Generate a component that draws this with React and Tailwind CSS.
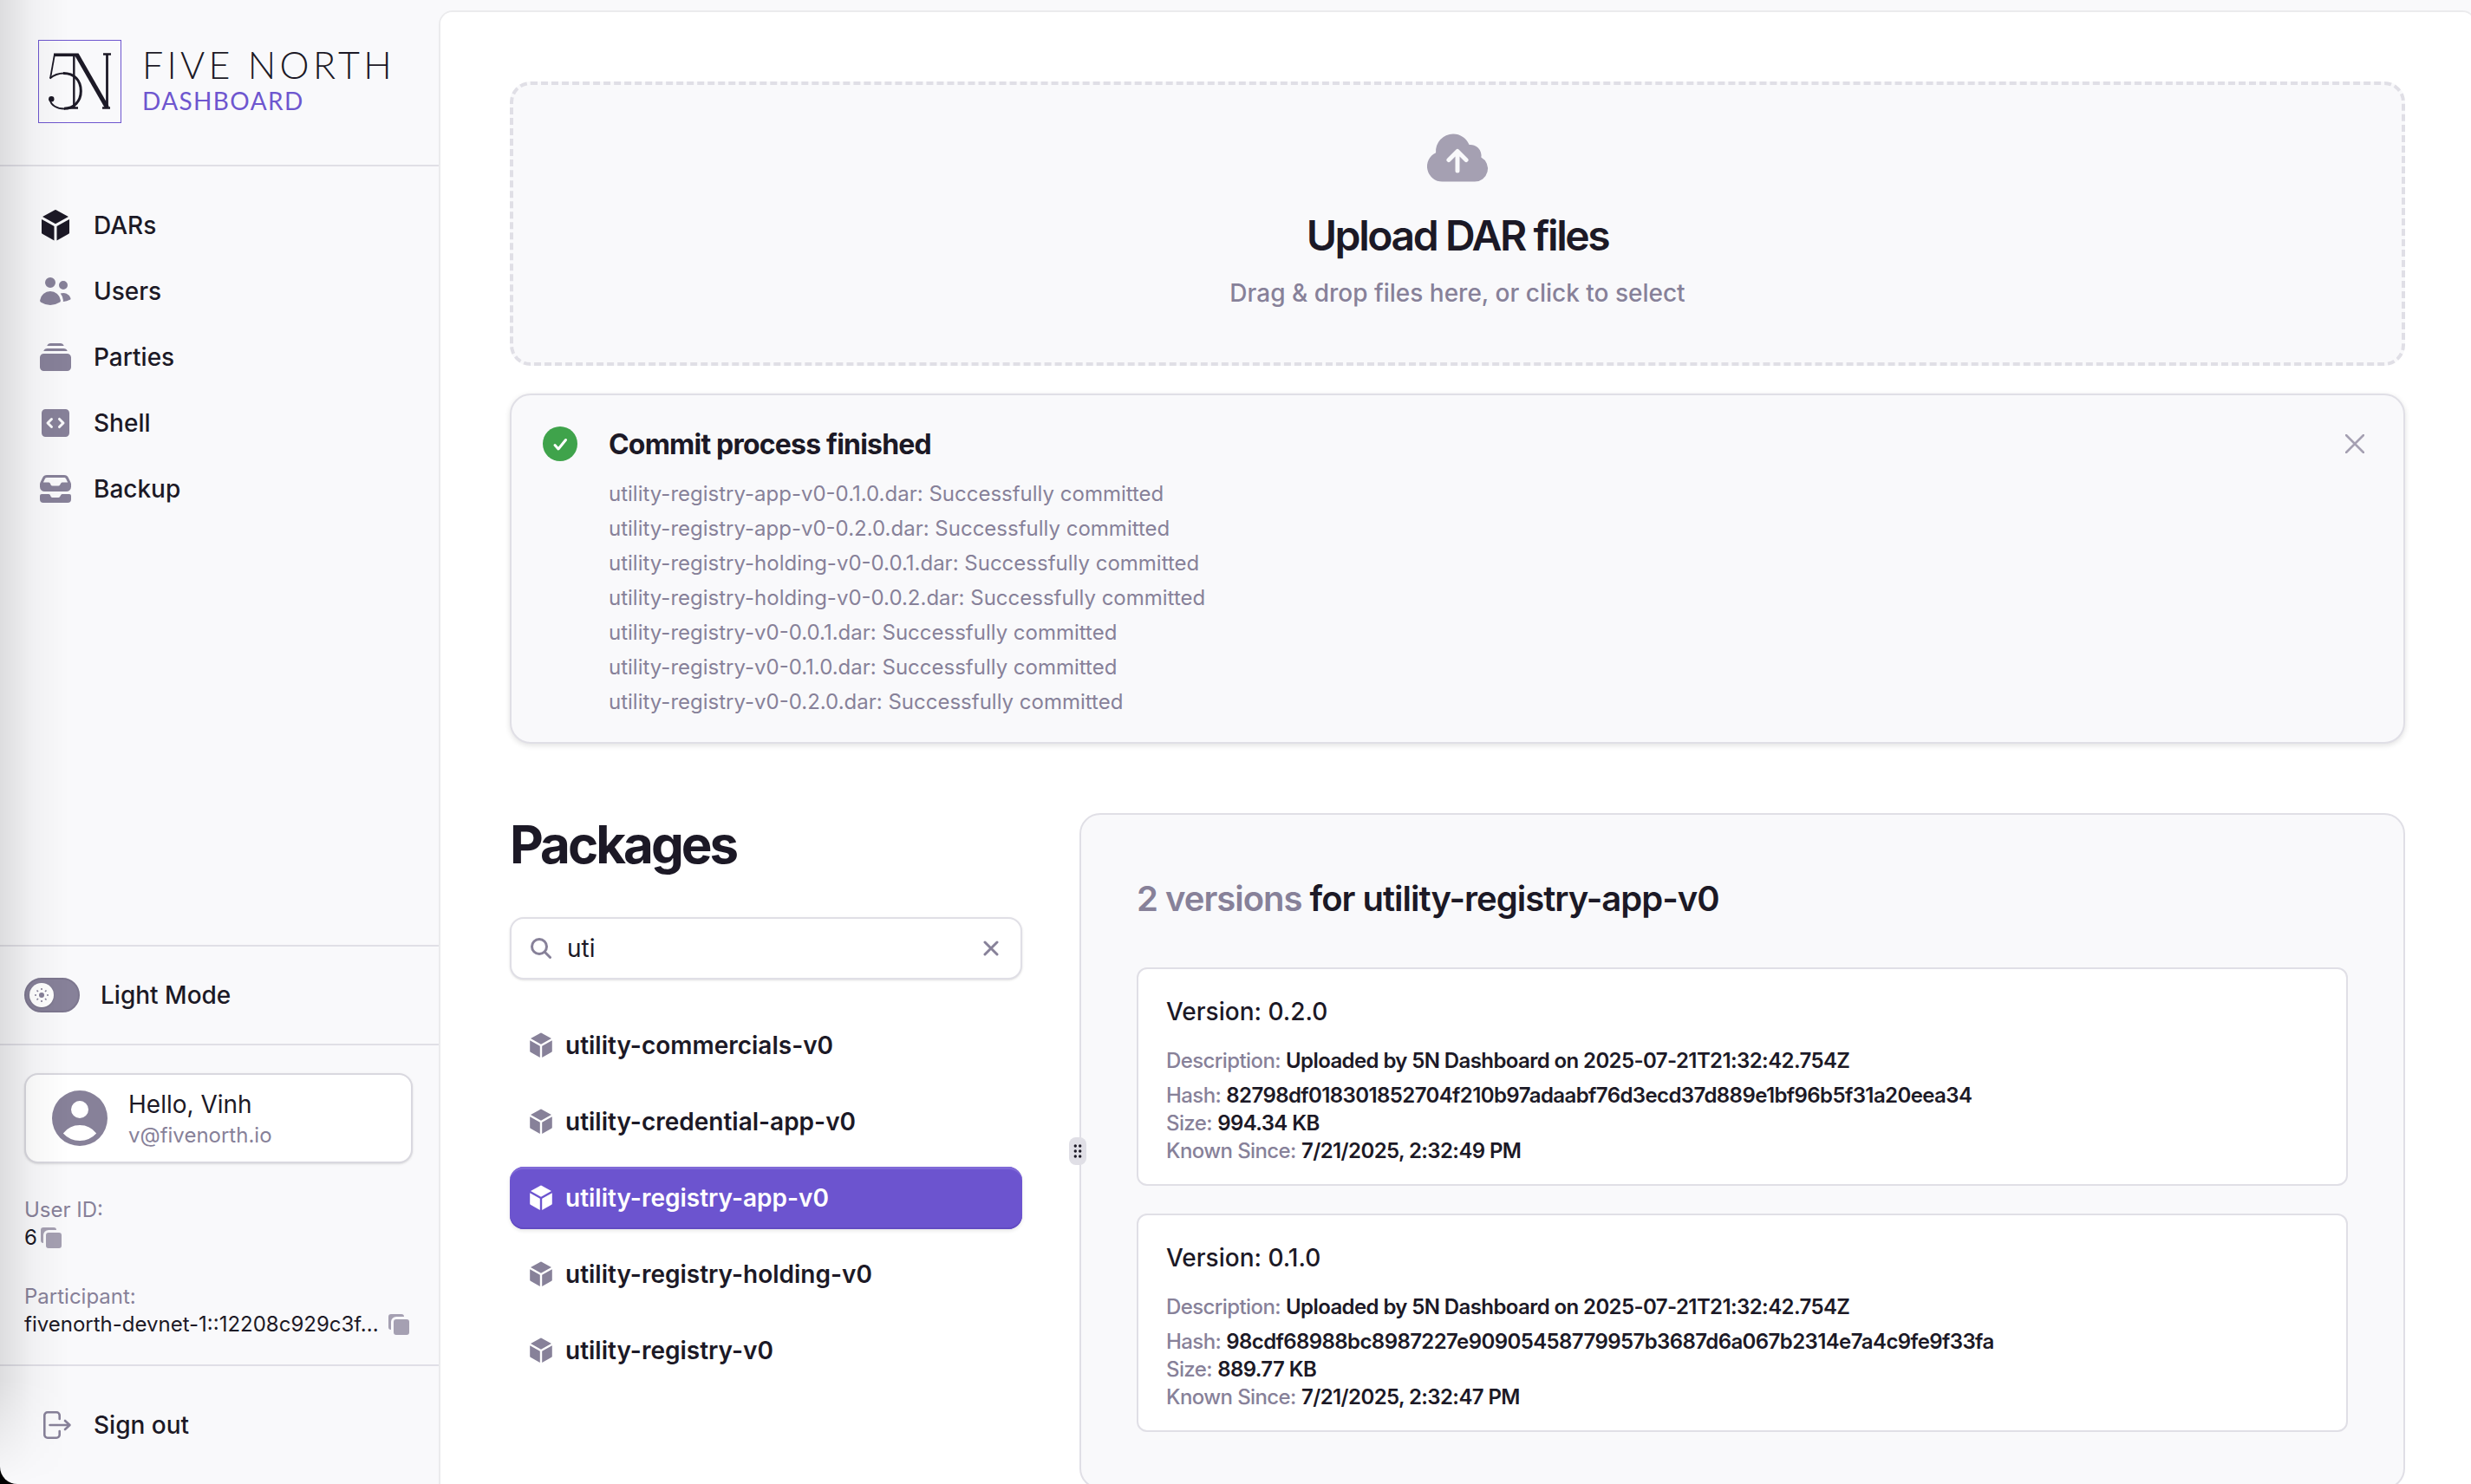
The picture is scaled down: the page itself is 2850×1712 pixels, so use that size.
import { useState } from "react";
import {
  HiCloudArrowUp,
  HiMiniCodeBracketSquare,
  HiMiniCube,
  HiMiniInboxStack,
  HiMiniRectangleStack,
  HiMiniUserCircle,
  HiMiniUsers,
} from "react-icons/hi2";

const navItems = [
  { label: "DARs", Icon: HiMiniCube, current: true },
  { label: "Users", Icon: HiMiniUsers },
  { label: "Parties", Icon: HiMiniRectangleStack },
  { label: "Shell", Icon: HiMiniCodeBracketSquare },
  { label: "Backup", Icon: HiMiniInboxStack },
];

const commits = [
  "utility-registry-app-v0-0.1.0.dar",
  "utility-registry-app-v0-0.2.0.dar",
  "utility-registry-holding-v0-0.0.1.dar",
  "utility-registry-holding-v0-0.0.2.dar",
  "utility-registry-v0-0.0.1.dar",
  "utility-registry-v0-0.1.0.dar",
  "utility-registry-v0-0.2.0.dar",
];

const packages = [
  "utility-commercials-v0",
  "utility-credential-app-v0",
  "utility-registry-app-v0",
  "utility-registry-holding-v0",
  "utility-registry-v0",
];

const versions = [
  {
    version: "0.2.0",
    description: "Uploaded by 5N Dashboard on 2025-07-21T21:32:42.754Z",
    hash: "82798df018301852704f210b97adaabf76d3ecd37d889e1bf96b5f31a20eea34",
    size: "994.34 KB",
    since: "7/21/2025, 2:32:49 PM",
  },
  {
    version: "0.1.0",
    description: "Uploaded by 5N Dashboard on 2025-07-21T21:32:42.754Z",
    hash: "98cdf68988bc8987227e90905458779957b3687d6a067b2314e7a4c9fe9f33fa",
    size: "889.77 KB",
    since: "7/21/2025, 2:32:47 PM",
  },
];

function Logo() {
  return (
    <div className="flex items-center gap-6">
      <svg viewBox="0 0 96 96" className="size-24 shrink-0" fill="none" aria-hidden="true">
        <rect x="0.5" y="0.5" width="95" height="95" stroke="#6e56cf" />
        <g stroke="#1c1926">
          <path d="M18 17.3H46.5" strokeWidth="3.6" />
          <path d="M19 16.5L14 44.5" strokeWidth="1.8" />
          <path d="M13.5 44.5C18 40.5 24 38.5 30 38.5" strokeWidth="2" />
          <path d="M29 38.5C42 38.5 49.3 47 49.3 59C49.3 71 41 79.3 30 79.3" strokeWidth="3" />
          <path d="M31 79.5C22 79.8 14.5 75.5 13.5 68.5" strokeWidth="1.8" />
          <path d="M41.3 18V78" strokeWidth="2.4" />
          <path d="M44.5 17L79.5 78" strokeWidth="5" />
          <path d="M79.5 17V78" strokeWidth="2.8" />
          <path d="M75 16.5H84M36 78.5H46M74 78.5H83" strokeWidth="2.4" />
        </g>
        <circle cx="15.3" cy="68.3" r="3.2" fill="#1c1926" />
      </svg>
      <div className="pb-1 font-['Lato',sans-serif]">
        <div className="text-[43px] leading-[44px] font-light tracking-widest whitespace-nowrap text-[#1c1926]">FIVE NORTH</div>
        <div className="mt-1 text-[28px] leading-[30px] tracking-wider text-[#6e56cf]">DASHBOARD</div>
      </div>
    </div>
  );
}

function CopyIcon() {
  return (
    <svg viewBox="2 2 12 12" className="size-6" fill="currentColor" aria-hidden="true">
      <path d="M5 6.5A1.5 1.5 0 0 1 6.5 5h6A1.5 1.5 0 0 1 14 6.5v6a1.5 1.5 0 0 1-1.5 1.5h-6A1.5 1.5 0 0 1 5 12.5v-6Z" />
      <path d="M3.5 2A1.5 1.5 0 0 0 2 3.5v6A1.5 1.5 0 0 0 3.5 11V6.5a3 3 0 0 1 3-3H11A1.5 1.5 0 0 0 9.5 2h-6Z" />
    </svg>
  );
}

function SunIcon() {
  return (
    <svg viewBox="0 0 16 16" className="size-4 text-[#878199]" aria-hidden="true">
      <circle cx="8" cy="8" r="3" fill="currentColor" />
      <path
        d="M8 0V2M8 14V16M0 8H2M14 8H16M2.5 2.5L4 4M12 12L13.5 13.5M13.5 2.5L12 4M4 12L2.5 13.5"
        stroke="currentColor"
        strokeWidth="1.6"
      />
    </svg>
  );
}

function Sidebar() {
  return (
    <aside className="relative flex w-[506px] shrink-0 flex-col text-[28px] leading-10">
      <div className="h-48 border-b-2 border-[#e0dfe6] px-11 pt-[46px]">
        <Logo />
      </div>
      <nav className="flex flex-1 flex-col gap-1 px-7 py-8">
        {navItems.map(({ label, Icon, current }) => (
          <a key={label} href="#" className="flex h-[72px] items-center gap-6 px-4 font-medium">
            <Icon className={current ? "size-10 text-[#1c1926]" : "size-10 text-[#878199]"} />
            {label}
          </a>
        ))}
      </nav>
      <div className="flex h-[116px] items-center gap-6 border-y-2 border-[#e0dfe6] px-7">
        <button
          type="button"
          role="switch"
          aria-checked="false"
          aria-labelledby="mode-label"
          className="flex h-10 w-16 items-center rounded-full border-2 border-[#7d778f] bg-[#878199] px-1"
        >
          <span className="flex size-7 items-center justify-center rounded-full bg-white shadow">
            <SunIcon />
          </span>
        </button>
        <span id="mode-label" className="font-medium">
          Light Mode
        </span>
      </div>
      <div className="flex flex-col gap-9 border-b-2 border-[#e0dfe6] pt-8 pr-[30px] pb-[30px] pl-7">
        <button
          type="button"
          className="flex h-[104px] items-center gap-6 rounded-2xl border-2 border-[#d9d8df] bg-white pl-[30px] text-left shadow-sm"
        >
          <HiMiniUserCircle className="-m-2 size-20 text-[#878199]" />
          <span className="pt-1">
            <span className="block leading-9">Hello, Vinh</span>
            <span className="block text-2xl leading-9 text-[#878199]">v@fivenorth.io</span>
          </span>
        </button>
        <div className="pt-0.5 text-2xl">
          <div className="leading-8 text-[#878199]">User ID:</div>
          <div className="flex items-center gap-1 leading-8">
            <span>6</span>
            <button type="button" aria-label="Copy user ID" className="text-[#a5a0b2]">
              <CopyIcon />
            </button>
          </div>
        </div>
        <div className="text-2xl">
          <div className="leading-8 text-[#878199]">Participant:</div>
          <div className="flex items-center justify-between pr-1 leading-8">
            <span className="whitespace-nowrap">fivenorth-devnet-1::12208c929c3f...</span>
            <button type="button" aria-label="Copy participant" className="text-[#a5a0b2]">
              <CopyIcon />
            </button>
          </div>
        </div>
      </div>
      <div className="px-7 py-8">
        <button type="button" className="flex h-[72px] items-center gap-6 px-4 font-medium">
          <svg
            viewBox="0 0 40 40"
            className="size-10 text-[#878199]"
            fill="none"
            stroke="currentColor"
            strokeWidth="2.6"
            strokeLinecap="round"
            strokeLinejoin="round"
            aria-hidden="true"
          >
            <path d="M24.7 13V8.8A3.5 3.5 0 0 0 21.2 5.3H10.8A3.5 3.5 0 0 0 7.3 8.8V31.2A3.5 3.5 0 0 0 10.8 34.7H21.2A3.5 3.5 0 0 0 24.7 31.2V27" />
            <path d="M13.5 20H36M31 15L36.5 20L31 25" />
          </svg>
          Sign out
        </button>
      </div>
      <div className="pointer-events-none absolute inset-y-0 left-0 w-20 bg-linear-to-r from-black/11 via-black/3 to-transparent mask-b-from-93%" />
    </aside>
  );
}

function UploadArea() {
  return (
    <button
      type="button"
      className="flex w-full flex-col items-center rounded-3xl border-4 border-dashed border-[#e0dfe6] bg-[#f9f9fb] pt-11 pb-[60px]"
    >
      <HiCloudArrowUp className="size-20 text-[#a5a0b2]" />
      <span className="mt-[18px] text-5xl leading-[64px] font-semibold tracking-tighter">Upload DAR files</span>
      <span className="mt-3.5 text-[28px] leading-10 font-medium text-[#878199]">
        Drag &amp; drop files here, or click to select
      </span>
    </button>
  );
}

function CommitNotice() {
  return (
    <section className="mt-8 flex gap-9 rounded-3xl border-2 border-[#e0dfe6] bg-[#f9f9fb] px-9 pt-9 pb-[26px] shadow-[0_2px_6px_rgba(0,0,0,0.12)]">
      <svg viewBox="0 0 40 40" className="size-10 shrink-0" fill="none" aria-hidden="true">
        <circle cx="20" cy="20" r="20" fill="#3fa34b" />
        <path d="M14 21.5L18 26L26.5 15.5" stroke="white" strokeWidth="3" strokeLinecap="round" strokeLinejoin="round" />
      </svg>
      <div className="flex-1">
        <h2 className="text-[32px] leading-[42px] font-bold tracking-tight">Commit process finished</h2>
        <ul className="mt-4 text-2xl leading-10 text-[#878199]">
          {commits.map((file) => (
            <li key={file}>{file}: Successfully committed</li>
          ))}
        </ul>
      </div>
      <button type="button" aria-label="Dismiss" className="flex size-10 items-center justify-center">
        <svg viewBox="0 0 22 22" className="size-[22px]" fill="none" stroke="#a5a0b2" strokeWidth="2.5" strokeLinecap="round" aria-hidden="true">
          <path d="M1 1L21 21M21 1L1 21" />
        </svg>
      </button>
    </section>
  );
}

function PackageList({ query, setQuery }) {
  return (
    <section>
      <h1 className="text-6xl leading-[72px] font-bold tracking-tighter">Packages</h1>
      <div className="mt-12 flex h-[72px] items-center gap-[18px] rounded-2xl border-2 border-[#e0dfe6] bg-white pr-5 pl-[22px] text-[28px] shadow-sm">
        <svg viewBox="0 0 24 24" className="size-6 shrink-0" fill="none" stroke="#878199" strokeWidth="3" strokeLinecap="round" aria-hidden="true">
          <circle cx="10" cy="10" r="8.5" />
          <path d="M16.5 16.5L22.5 22.5" />
        </svg>
        <input
          type="text"
          aria-label="Search packages"
          value={query}
          onChange={(event) => setQuery(event.target.value)}
          className="min-w-0 flex-1 outline-none"
        />
        <button type="button" aria-label="Clear search" onClick={() => setQuery("")} className="flex size-7 items-center justify-center">
          <svg viewBox="0 0 18 18" className="size-[18px]" fill="none" stroke="#878199" strokeWidth="3" strokeLinecap="round" aria-hidden="true">
            <path d="M2 2L16 16M16 2L2 16" />
          </svg>
        </button>
      </div>
      <ul className="mt-10 flex flex-col gap-4">
        {packages.map((name) => {
          const selected = name === "utility-registry-app-v0";
          return (
            <li key={name}>
              <button
                type="button"
                className={
                  selected
                    ? "flex h-[72px] w-full items-center gap-3 rounded-2xl bg-[#6c54cf] px-5 text-[28px] font-semibold text-white shadow-[inset_0_-2px_0_#624bc2,inset_0_4px_0_-1px_#7f69d7,0_2px_4px_rgba(0,0,0,0.1)]"
                    : "flex h-[72px] w-full items-center gap-3 rounded-2xl px-5 text-[28px] font-semibold"
                }
              >
                <HiMiniCube className={selected ? "size-8 text-white" : "size-8 text-[#878199]"} />
                {name}
              </button>
            </li>
          );
        })}
      </ul>
    </section>
  );
}

function Field({ label, value }) {
  return (
    <>
      <span className="font-medium text-[#878199]">{label}:</span> <span className="font-semibold">{value}</span>
    </>
  );
}

function VersionPanel() {
  return (
    <section className="relative rounded-3xl border-2 border-[#e0dfe6] bg-[#f9f9fb] p-16">
      <button
        type="button"
        aria-label="Resize panels"
        className="absolute top-1/2 -left-3.5 flex h-8 w-5 -translate-y-1/2 items-center justify-center rounded-lg bg-[#e0dfe6]"
      >
        <svg viewBox="0 0 10 16" className="h-4 w-2.5" fill="#1c1926" aria-hidden="true">
          <circle cx="2.3" cy="2" r="1.7" />
          <circle cx="7.7" cy="2" r="1.7" />
          <circle cx="2.3" cy="8" r="1.7" />
          <circle cx="7.7" cy="8" r="1.7" />
          <circle cx="2.3" cy="14" r="1.7" />
          <circle cx="7.7" cy="14" r="1.7" />
        </svg>
      </button>
      <h2 className="text-[40px] leading-[66px] font-semibold tracking-tight">
        <span className="text-[#878199]">2 versions</span> for utility-registry-app-v0
      </h2>
      <div className="mt-[46px] flex flex-col gap-8">
        {versions.map((item) => (
          <article key={item.version} className="rounded-xl border-2 border-[#e0dfe6] bg-white px-8 pt-8 pb-[22px] text-2xl tracking-tight">
            <h3 className="text-[28px] leading-[34px] font-medium tracking-normal">Version: {item.version}</h3>
            <p className="mt-5 mb-1 leading-10">
              <Field label="Description" value={item.description} />
            </p>
            <p className="leading-8">
              <Field label="Hash" value={item.hash} />
            </p>
            <p className="leading-8">
              <Field label="Size" value={item.size} />
            </p>
            <p className="leading-8">
              <Field label="Known Since" value={item.since} />
            </p>
          </article>
        ))}
      </div>
    </section>
  );
}

export default function App() {
  const [query, setQuery] = useState("uti");
  return (
    <div className="h-screen bg-black font-['Inter',sans-serif] text-[#1c1926]">
      <div className="flex h-full overflow-hidden rounded-bl-[20px] bg-[#f9f9fb]">
        <Sidebar />
        <main className="mt-3 -mr-1.5 min-w-0 flex-1 overflow-y-auto rounded-t-2xl border-2 border-b-0 border-[#ebebed] bg-white p-20 [scrollbar-width:none]">
          <UploadArea />
          <CommitNotice />
          <div className="mt-20 grid grid-cols-[591fr_1529fr] gap-[66px]">
            <PackageList query={query} setQuery={setQuery} />
            <VersionPanel />
          </div>
        </main>
      </div>
    </div>
  );
}
